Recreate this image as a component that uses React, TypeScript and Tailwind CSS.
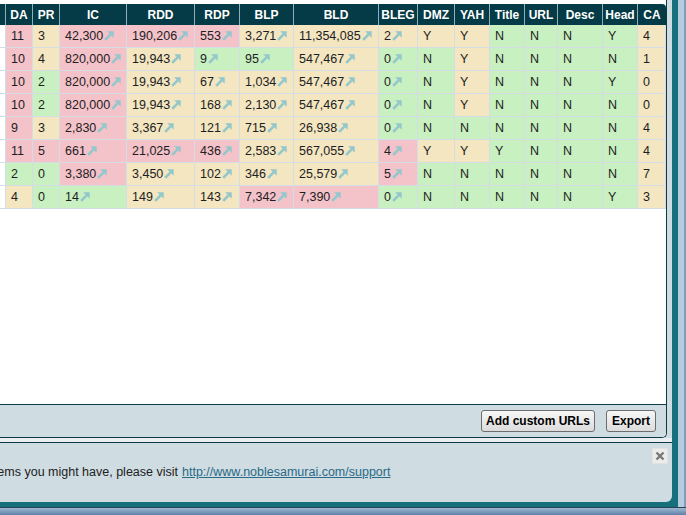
import React from "react";

type Tone = "p" | "b" | "g";

const headers = ["DA", "PR", "IC", "RDD", "RDP", "BLP", "BLD", "BLEG", "DMZ", "YAH", "Title", "URL", "Desc", "Head", "CA"];

// columns IC..BLEG carry the little "open" arrow
const linked = new Set([2, 3, 4, 5, 6, 7]);

const rows: { values: string[]; tones: string }[] = [
    { values: ["11", "3", "42,300", "190,206", "553", "3,271", "11,354,085", "2", "Y", "Y", "N", "N", "N", "Y", "4"], tones: "pbpppbbbbbggggb" },
    { values: ["10", "4", "820,000", "19,943", "9", "95", "547,467", "0", "N", "Y", "N", "N", "N", "N", "1"], tones: "pbpbggbggbggggb" },
    { values: ["10", "2", "820,000", "19,943", "67", "1,034", "547,467", "0", "N", "Y", "N", "N", "N", "Y", "0"], tones: "pgpbbbbggbggggb" },
    { values: ["10", "2", "820,000", "19,943", "168", "2,130", "547,467", "0", "N", "Y", "N", "N", "N", "N", "0"], tones: "pgpbbbbggbggggb" },
    { values: ["9", "3", "2,830", "3,367", "121", "715", "26,938", "0", "N", "N", "N", "N", "N", "N", "4"], tones: "pbpbbbbgggggggb" },
    { values: ["11", "5", "661", "21,025", "436", "2,583", "567,055", "4", "Y", "Y", "Y", "N", "N", "N", "4"], tones: "pppppbbpbbggggb" },
    { values: ["2", "0", "3,380", "3,450", "102", "346", "25,579", "5", "N", "N", "N", "N", "N", "N", "7"], tones: "ggpbbbbpggggggb" },
    { values: ["4", "0", "14", "149", "143", "7,342", "7,390", "0", "N", "N", "N", "N", "N", "Y", "3"], tones: "bggbbppgggggggb" },
];

const toneClass: Record<Tone, string> = {
    p: "bg-[#f4c2c9]",
    b: "bg-[#f3e6c0]",
    g: "bg-[#c9f0c1]",
};

function LinkArrow() {
    return (
        <svg width="10" height="10" viewBox="0 0 10 10" className="ml-px shrink-0">
            <path d="M3.2 0.3H9.7V6.8Z" fill="#93c7cb" />
            <path d="M1.2 8.8L6.6 3.4" stroke="#93c7cb" strokeWidth="2.6" />
        </svg>
    );
}

function ResultsTable() {
    return (
        <div className="grid grid-cols-[6px_27px_27px_67px_68px_45px_54px_85px_39px_37px_35px_35px_33px_45px_35px_28px]">
            <div className="h-[21px] bg-[#053b46] border-r border-[#8fb0b8]" />
            {headers.map((h, i) => (
                <div
                    key={h}
                    className={`h-[21px] bg-[#053b46] text-white text-[12px] font-bold flex items-center justify-center ${
                        i === headers.length - 1 ? "rounded-tr-[4px]" : "border-r border-[#8fb0b8]"
                    }`}
                >
                    {h}
                </div>
            ))}
            {rows.map((row, r) => (
                <React.Fragment key={r}>
                    <div className="h-[23px] bg-white border-r border-b border-[#d4dde3]" />
                    {row.values.map((v, i) => (
                        <div
                            key={i}
                            className={`h-[23px] flex items-center px-[5px] border-r border-b border-[#d4dde3] text-[12.5px] text-[#1d1d24] ${toneClass[row.tones[i] as Tone]}`}
                        >
                            {v}
                            {linked.has(i) && <LinkArrow />}
                        </div>
                    ))}
                </React.Fragment>
            ))}
        </div>
    );
}

function ToolButton({ children, className }: { children: React.ReactNode; className?: string }) {
    return (
        <button
            type="button"
            className={`h-[22px] rounded-[3px] border border-[#6d6d6d] bg-gradient-to-b from-[#f7f7f7] to-[#dcdcdc] text-[12px] font-bold text-black leading-none ${className ?? ""}`}
        >
            {children}
        </button>
    );
}

export default function App() {
    return (
        <div className="w-[686px] h-[515px] overflow-hidden flex flex-col bg-white font-['Liberation_Sans',Arial,sans-serif]">
            <div className="flex flex-1 min-h-0">
                <div className="flex-1 flex flex-col bg-[#16707b] pr-[6px] pb-[5px]">
                    <div className="flex-1 flex flex-col bg-[#cfdce2] rounded-br-[6px]">
                        <div className="pr-[5px]">
                            <div className="h-[438px] flex flex-col bg-white border-r border-b border-[#0b3b45] rounded-br-[5px]">
                                <div className="flex-1 pt-[4px]">
                                    <ResultsTable />
                                </div>
                                <div className="h-[33px] flex items-center justify-end gap-[11px] pr-[10px] bg-[#cfdce2] border-t border-[#0b3b45] rounded-br-[5px]">
                                    <ToolButton className="px-[4px]">Add custom URLs</ToolButton>
                                    <ToolButton className="px-[5px]">Export</ToolButton>
                                </div>
                            </div>
                        </div>
                        <div className="h-[4px] bg-[#e8eef1]" />
                        <div className="relative flex-1 flex items-center border-t border-[#0b3b45] text-[12.5px] text-[#222]">
                            <div className="w-[178px] flex justify-end overflow-hidden whitespace-nowrap">
                                <span className="shrink-0">If you need help with any questions or problems you might have, please visit</span>
                            </div>
                            <a href="#" className="ml-[4px] whitespace-nowrap text-[#2a6a86] underline">
                                http://www.noblesamurai.com/support
                            </a>
                            <button
                                type="button"
                                className="absolute top-[5px] right-[4px] w-[16px] h-[16px] flex items-center justify-center bg-[#ececec] border border-[#e2e2e2]"
                            >
                                <svg width="10" height="10" viewBox="0 0 10 10">
                                    <path d="M1.5 1.5L8.5 8.5M8.5 1.5L1.5 8.5" stroke="#777" strokeWidth="2.4" />
                                </svg>
                            </button>
                        </div>
                    </div>
                </div>
                <div className="w-[8px] bg-[#b6cde1] border-r-2 border-[#7f9cb8]" />
            </div>
            <div className="h-[8px] border-t border-[#2a4256] bg-gradient-to-b from-[#9fb8d1] to-[#5e81a7]" />
        </div>
    );
}
